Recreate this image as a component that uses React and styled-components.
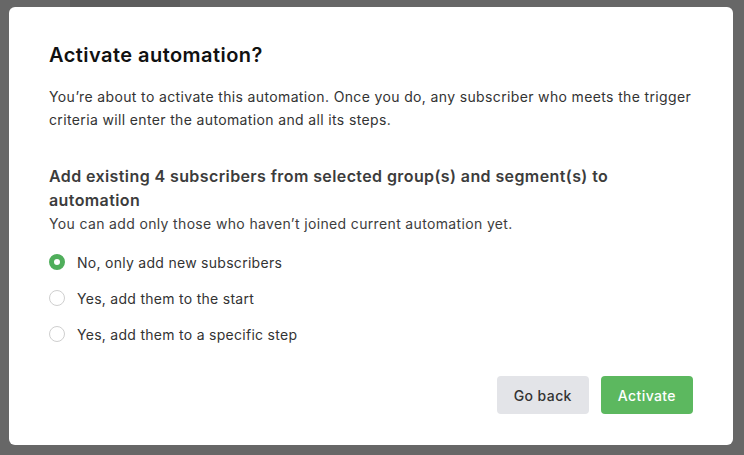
import React, { useState } from 'react'
import styled, { createGlobalStyle } from 'styled-components'

const options = [
  { id: 'new', label: 'No, only add new subscribers' },
  { id: 'start', label: 'Yes, add them to the start' },
  { id: 'step', label: 'Yes, add them to a specific step' },
]

const App = () => {
  const [choice, setChoice] = useState('new')

  return (
    <>
      <GlobalStyle />
      <Overlay>
        <Modal role="dialog" aria-labelledby="activate-title">
          <Title id="activate-title">Activate automation?</Title>
          <Text>
            You’re about to activate this automation. Once you do, any subscriber who meets the trigger criteria will
            enter the automation and all its steps.
          </Text>
          <Section>
            <Subtitle>Add existing 4 subscribers from selected group(s) and segment(s) to automation</Subtitle>
            <Hint>You can add only those who haven’t joined current automation yet.</Hint>
            <Options>
              {options.map(option => (
                <Option key={option.id}>
                  <RadioInput
                    type="radio"
                    name="existing"
                    checked={choice === option.id}
                    onChange={() => setChoice(option.id)}
                  />
                  <Radio $checked={choice === option.id} />
                  <span>{option.label}</span>
                </Option>
              ))}
            </Options>
          </Section>
          <Actions>
            <Button>Go back</Button>
            <Button $primary>Activate</Button>
          </Actions>
        </Modal>
      </Overlay>
    </>
  )
}

const GlobalStyle = createGlobalStyle`
  html, body {
    margin: 0;
    padding: 0;
    background: #676767;
  }

  body {
    font-family: Inter, "Noto Sans", "Liberation Sans", sans-serif;
    -webkit-font-smoothing: antialiased;
  }

  * {
    box-sizing: border-box;
  }
`

const Overlay = styled.div`
  min-height: 455px;
  padding-top: 7px;
  padding-left: 9px;
  background: linear-gradient(#5d5d5d, #5d5d5d) 70px 0 / 110px 7px no-repeat, #676767;
`

const Modal = styled.div`
  width: 724px;
  padding: 34px 40px 31px;
  background: #fff;
  border-radius: 6px;
`

const Title = styled.h2`
  margin: 0 0 16px;
  font-size: 20px;
  line-height: 28px;
  font-weight: 600;
  letter-spacing: 0.45px;
  color: #111;
`

const Text = styled.p`
  margin: 0;
  font-size: 14px;
  line-height: 23px;
  letter-spacing: 0.36px;
  color: #333;
`

const Section = styled.div`
  margin-top: 33px;
`

const Subtitle = styled.h3`
  margin: 0;
  font-size: 16px;
  line-height: 24px;
  font-weight: 600;
  letter-spacing: 0.4px;
  color: #3c3c3c;
`

const Hint = styled.p`
  margin: 0;
  font-size: 14px;
  line-height: 24px;
  letter-spacing: 0.35px;
  color: #3d3d3d;
`

const Options = styled.div`
  display: flex;
  flex-direction: column;
  gap: 12px;
  margin-top: 14px;
`

const Option = styled.label`
  display: flex;
  align-items: center;
  gap: 12px;
  height: 24px;
  font-size: 14px;
  letter-spacing: 0.28px;
  color: #333;
  cursor: pointer;
`

const RadioInput = styled.input`
  position: absolute;
  opacity: 0;
  pointer-events: none;
`

const Radio = styled.span`
  width: 16px;
  height: 16px;
  flex: 0 0 16px;
  border-radius: 50%;
  background: #fff;
  border: ${p => (p.$checked ? '5px solid #4fae5b' : '1px solid #cfcfcf')};
`

const Actions = styled.div`
  display: flex;
  justify-content: flex-end;
  gap: 12px;
  margin-top: 30px;
`

const Button = styled.button`
  height: 38px;
  padding: 0 17px;
  border: none;
  border-radius: 4px;
  font-family: inherit;
  font-size: 14px;
  font-weight: 500;
  letter-spacing: 0.4px;
  color: ${p => (p.$primary ? '#fff' : '#333')};
  background: ${p => (p.$primary ? '#5cb85f' : '#e3e4e8')};
  cursor: pointer;
`

export default App
